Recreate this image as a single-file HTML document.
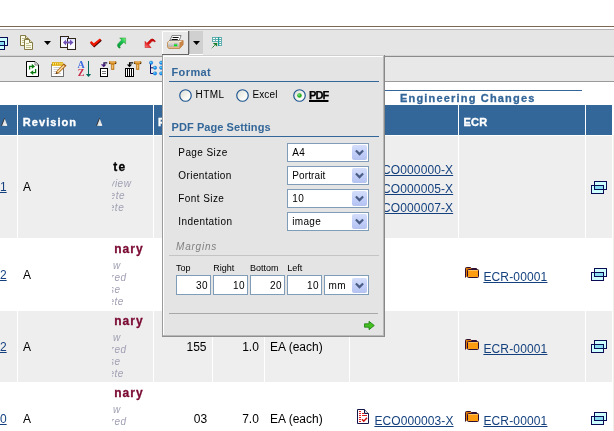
<!DOCTYPE html>
<html>
<head>
<meta charset="utf-8">
<style>
html,body{margin:0;padding:0;}
body{width:614px;height:431px;overflow:hidden;position:relative;background:#fff;font-family:"Liberation Sans",sans-serif;font-size:12px;color:#000;}
.a{position:absolute;}
.t{position:absolute;white-space:pre;line-height:1;}
.hd{position:absolute;top:105px;height:30px;background:#336699;}
.ht{position:absolute;white-space:pre;line-height:1;font-weight:bold;font-size:11px;color:#fff;top:117px;letter-spacing:1.05px;-webkit-text-stroke:0.35px #fff;}
.row{position:absolute;left:0;width:612px;background:#eeeeee;}
.vs{position:absolute;width:1px;background:#fff;}
.lnk{position:absolute;white-space:pre;line-height:1;font-size:12px;color:#14417e;text-decoration:underline;}
.d{position:absolute;white-space:pre;line-height:1;font-size:12px;color:#000;}
.gi{position:absolute;white-space:pre;line-height:1;font-size:10px;font-style:italic;color:#a0a0b4;letter-spacing:0.5px;}
.clip{position:absolute;left:112px;width:41px;overflow:hidden;}
.pl{position:absolute;white-space:pre;line-height:1;font-size:10px;color:#000;letter-spacing:0.42px;left:178.3px;}
.sel{position:absolute;left:287px;width:80px;height:17px;border:1px solid #7f9db9;background:#fff;}
.sel span{position:absolute;left:4.3px;top:4px;white-space:pre;line-height:1;font-size:10px;letter-spacing:0.3px;}
.btn{position:absolute;right:1px;top:1px;width:15px;height:15px;border-radius:2px;background:linear-gradient(180deg,#d4defb 0%,#c0cdf8 60%,#b4c2f0 100%);}
.inp{position:absolute;top:275px;width:33px;height:18px;border:1px solid #7f9db9;background:#fff;}
.inp span{position:absolute;right:2px;top:5px;white-space:pre;line-height:1;font-size:10px;letter-spacing:0.5px;}
.ml{position:absolute;top:264px;white-space:pre;line-height:1;font-size:9px;color:#000;}
</style>
</head>
<body>
<div id="wrap" style="position:absolute;left:0;top:0;width:614px;height:431px;will-change:transform">

<!-- top lines -->
<div class="a" style="left:0;top:26px;width:614px;height:1px;background:#7c6654"></div>
<div class="a" style="left:0;top:29px;width:614px;height:1px;background:#b4b4b4"></div>
<!-- toolbar 1 -->
<div class="a" style="left:0;top:30px;width:614px;height:25px;background:#e5e5e5"></div>
<div class="a" style="left:0;top:55px;width:614px;height:1px;background:#d4d4d4"></div>
<div class="a" style="left:0;top:56px;width:614px;height:1px;background:#9c9c9c"></div>
<!-- toolbar 2 -->
<div class="a" style="left:0;top:57px;width:614px;height:24px;background:#e8e8e8"></div>
<div class="a" style="left:385px;top:56px;width:229px;height:1px;background:#8a8a8a"></div>
<div class="a" style="left:0;top:81px;width:614px;height:1px;background:#9a9a9a"></div>

<!-- TOOLBAR1 ICONS -->
<svg class="a" style="left:-8px;top:37px" width="16" height="13" viewBox="0 0 16 13"><rect x="3.5" y="0.5" width="12" height="8" fill="#ccffff" stroke="#0a0a55"/><rect x="0.5" y="4.5" width="12" height="8" fill="#ccffff" stroke="#0a0a55"/><rect x="4" y="5" width="8" height="3" fill="#88ddf0"/><rect x="3.5" y="4.5" width="9" height="4" fill="none" stroke="#0a0a55"/></svg>
<svg class="a" style="left:20px;top:35px" width="14" height="15" viewBox="0 0 14 15">
<path d="M0.5 0.5H5.5L8.5 3.5V10.5H0.5Z" fill="#fbfbea" stroke="#857a42"/>
<path d="M5.5 0.5V3.5H8.5" fill="#e8e4c0" stroke="#857a42"/>
<path d="M2 3.5H5M2 5.5H7M2 7.5H7" stroke="#c4bf90"/>
<path d="M4.5 4.5H9.5L12.5 7.5V14.5H4.5Z" fill="#fbfbea" stroke="#857a42"/>
<path d="M9.5 4.5V7.5H12.5" fill="#e8e4c0" stroke="#857a42"/>
<path d="M6 8.5H9M6 10.5H11M6 12.5H11" stroke="#c4bf90"/>
</svg>
<svg class="a" style="left:44px;top:41px" width="7" height="4" viewBox="0 0 7 4"><path d="M0 0H7L3.5 4Z" fill="#000"/></svg>
<svg class="a" style="left:60px;top:36px" width="16" height="14" viewBox="0 0 16 14">
<defs><linearGradient id="cg" x1="0" y1="0" x2="0" y2="1"><stop offset="0" stop-color="#d8e0ff"/><stop offset="0.5" stop-color="#fff"/><stop offset="1" stop-color="#f4f4ff"/></linearGradient></defs>
<rect x="0.5" y="0.5" width="8" height="11" fill="url(#cg)" stroke="#33241a"/>
<rect x="7.5" y="2.5" width="8" height="11" fill="url(#cg)" stroke="#33241a"/>
<path d="M3 6.5L6 3.6V5.6H10V3.6L13.5 6.5L10 9.4V7.4H6V9.4Z" fill="#7352b8"/>
</svg>
<svg class="a" style="left:89px;top:38px" width="13" height="10" viewBox="0 0 13 10">
<path d="M1.4 5.4L5.2 9.6L12.8 2.8L11.6 1.6L5.4 6.6L2.8 4Z" fill="#4a0000"/>
<path d="M0.8 4.6L4.8 8.6L12.2 1.8L10.8 0.4L4.8 5.2L2.4 2.9Z" fill="#f01800"/>
</svg>
<svg class="a" style="left:116.4px;top:36.6px" width="11" height="12" viewBox="0 0 12 13">
<defs><linearGradient id="gg" x1="0" y1="1" x2="1" y2="0"><stop offset="0" stop-color="#00963c"/><stop offset="0.6" stop-color="#14c050"/><stop offset="1" stop-color="#7dff7d"/></linearGradient></defs>
<path d="M4 1H10.5V7.5L8.6 5.6L4.6 9.6Q3.6 10.6 4.8 11.8L3.6 12.2Q0.2 9.6 2.2 7.2L6.1 3.1Z" fill="url(#gg)" stroke="#2c8a2c" stroke-width="0.5"/>
</svg>
<svg class="a" style="left:143.5px;top:37.6px" width="12.2" height="10.2" viewBox="0 0 13 11">
<defs><linearGradient id="rg" x1="1" y1="0" x2="0" y2="1"><stop offset="0" stop-color="#b00000"/><stop offset="0.6" stop-color="#e01010"/><stop offset="1" stop-color="#ff8c8c"/></linearGradient></defs>
<path d="M1 10.4V3.6L3 5.6L7 1.6Q9.4 -0.4 12.4 3.6L11.2 4.2Q9.8 2.6 8.6 3.6L5 7.4L7.6 10.4Z" fill="url(#rg)" stroke="#c01010" stroke-width="0.5"/>
</svg>
<div class="a" style="left:162px;top:31px;width:27px;height:24px;background:#e8e8e8"></div>
<div class="a" style="left:162px;top:31px;width:1px;height:24px;background:#fff"></div>
<div class="a" style="left:162px;top:31px;width:26px;height:1px;background:#fbfbfb"></div>
<div class="a" style="left:188px;top:31px;width:1px;height:24px;background:#666"></div>
<div class="a" style="left:162px;top:54px;width:27px;height:1px;background:#666"></div>
<div class="a" style="left:189px;top:31px;width:14px;height:23px;background:#d0d0d0"></div>
<div class="a" style="left:189px;top:31px;width:1px;height:24px;background:#b0b0b0"></div>
<div class="a" style="left:189px;top:54px;width:14px;height:1px;background:#fff"></div>
<svg class="a" style="left:193px;top:41px" width="7" height="4" viewBox="0 0 7 4"><path d="M0 0H7L3.5 4Z" fill="#000"/></svg>
<svg class="a" style="left:167px;top:35px" width="17" height="14" viewBox="0 0 17 14">
<defs><linearGradient id="pg" x1="0" y1="0" x2="0" y2="1"><stop offset="0" stop-color="#e4e4e4"/><stop offset="1" stop-color="#b0b0b0"/></linearGradient></defs>
<path d="M0.4 7.4L2.8 5.5H16.1V9.6L12.6 13.6H1.8L0.4 11.8Z" fill="#e6bb88" stroke="#b4763a" stroke-width="0.8"/>
<path d="M12.4 7.3L16 5.6V9.5L12.4 13.4Z" fill="#c88444"/>
<path d="M0.7 7.3L2.9 5.7H15.6L12.4 7.3Z" fill="#fffbe6"/>
<rect x="0.9" y="7.4" width="11.4" height="4.3" fill="url(#pg)"/>
<path d="M5.2 0.4H14L13.4 2.6L12 5.7H2.8Z" fill="#fff" stroke="#4a4a4a" stroke-width="0.7"/>
<path d="M5.6 2.5H11.6M4.6 4.5H10.8" stroke="#111" stroke-width="1"/>
<rect x="7.2" y="8.5" width="3" height="0.9" fill="#9888a8"/>
<rect x="7" y="9.4" width="3.3" height="1.8" fill="#00e414"/>
</svg>
<svg class="a" style="left:211px;top:37px" width="12" height="12" viewBox="0 0 12 12">
<rect x="1" y="0" width="10" height="5" fill="#fff"/><rect x="7" y="5" width="4" height="4" fill="#fff"/>
<path d="M1.5 0V5M4.5 0V5M10.5 0V9M1 0.5H11M1 2.5H11M1 4.5H11M7 6.5H11M7 8.5H11" stroke="#62aeae" stroke-width="1" fill="none"/>
<path d="M7.6 0V9" stroke="#1a9c9c" stroke-width="1.3"/>
<path d="M1.8 6H6.1V9.6Z" fill="#0c6c1c"/><path d="M3 6.4H5.6V8.6Z" fill="#2a9a30"/>
<path d="M4.2 7.8L0.8 11.2" stroke="#0c6c1c" stroke-width="1" stroke-dasharray="1.2 0.7"/>
</svg>
<!-- TOOLBAR2 ICONS -->
<svg class="a" style="left:26px;top:61px" width="13" height="16" viewBox="0 0 13 16">
<path d="M0.5 0.5H9L12.5 4V15.5H0.5Z" fill="#fff" stroke="#000"/>
<path d="M9 0.8V4H12.2" fill="#f0f0f0" stroke="#777" stroke-width="0.9"/>
<path d="M3.6 8.6V5.4H6.5" fill="none" stroke="#0c7c10" stroke-width="1.3"/>
<path d="M5.8 2.8L9 5.4L5.8 7.8Z" fill="#0c7c10"/>
<path d="M9.6 8V11.6H6.5" fill="none" stroke="#0c7c10" stroke-width="1.3"/>
<path d="M7.2 9.2L4 11.6L7.2 13.9Z" fill="#0c7c10"/>
</svg>
<svg class="a" style="left:51px;top:61px" width="16" height="16" viewBox="0 0 16 16">
<rect x="0.5" y="3.5" width="12" height="12" fill="#fff" stroke="#8a8a8a"/>
<path d="M0.5 15.5H12.5V6" fill="none" stroke="#6e6e6e"/>
<path d="M2.5 6.5H9M2.5 8.5H8M2.5 10.5H7M2.5 12.5H10" stroke="#cfcfcf"/>
<rect x="0.9" y="1.2" width="11.2" height="3.6" fill="#dcaa00"/>
<path d="M2.4 2V3.6M4.6 2V3.6M6.8 2V3.6M9 2V3.6M11 2V3.6" stroke="#ffe9a0" stroke-width="1"/>
<path d="M5.2 10.4L12.8 2.6L15.4 4.8L7.4 12.6L4.7 12.9Z" fill="#b06a18"/>
<path d="M6 10.8L13.2 3.6L14.2 4.6L7 11.8Z" fill="#ffe2a8"/>
<path d="M4.7 12.9L5.1 11.2L6.6 12.6Z" fill="#402a10"/>
<path d="M12.8 2.6L15.4 4.8L14.6 5.6L12 3.4Z" fill="#9a5a10"/>
</svg>
<div class="t" style="left:77.5px;top:59.5px;font-family:'Liberation Serif',serif;font-weight:bold;font-size:10px;color:#3a6ae0">A</div>
<div class="t" style="left:77.8px;top:67.5px;font-family:'Liberation Serif',serif;font-weight:bold;font-size:10px;color:#cc2848">Z</div>
<svg class="a" style="left:85px;top:61px" width="7" height="16" viewBox="0 0 7 16"><path d="M3.5 0V14" stroke="#00665a" stroke-width="1"/><path d="M0.9 13H6.1L3.5 16Z" fill="#00665a"/></svg>
<svg class="a" style="left:100px;top:62px" width="9" height="15" viewBox="0 0 9 15">
<path d="M7.2 0.8H4V3.4" fill="none" stroke="#1c1050" stroke-width="1.3"/><path d="M1 2.4H6.4L3.8 5.3Z" fill="#3a1570"/><path d="M1 2.4H3L3.2 4.6Z" fill="#7a3ab0"/>
<rect x="0.5" y="6.5" width="7" height="8" fill="#fff" stroke="#000"/><path d="M2 9.5H6M2 11.5H6" stroke="#777"/></svg>
<svg class="a" style="left:109px;top:61px" width="8" height="9" viewBox="0 0 8 9"><path d="M0.2 0.4H7V2.2L5 3.2V8.7H2.4V3.2L0.2 2.2Z" fill="#d48a22" stroke="#a8640e" stroke-width="0.5"/><path d="M0.2 1.6V2.4L1.2 2.8M7 1.6V2.4L6 2.8" stroke="#3a2000" stroke-width="0.9" fill="none"/><path d="M1.2 1H6" stroke="#ffd080" stroke-width="0.8"/><path d="M3.7 4V7.6" stroke="#ffe0a0" stroke-width="0.8"/></svg>
<svg class="a" style="left:125px;top:62px" width="10" height="15" viewBox="0 0 10 15">
<path d="M8.2 0.8H4.6V3.4" fill="none" stroke="#000" stroke-width="1.3"/><path d="M1.8 2.4H7.2L4.5 5.3Z" fill="#000"/>
<rect x="0.5" y="6.5" width="8" height="8" fill="#fff" stroke="#000"/><path d="M2.5 7V14M4.5 7V14M6.5 7V14" stroke="#000"/></svg>
<svg class="a" style="left:134px;top:61px" width="8" height="9" viewBox="0 0 8 9"><path d="M0.2 0.4H7V2.2L5 3.2V8.7H2.4V3.2L0.2 2.2Z" fill="#d48a22" stroke="#a8640e" stroke-width="0.5"/><path d="M0.2 1.6V2.4L1.2 2.8M7 1.6V2.4L6 2.8" stroke="#3a2000" stroke-width="0.9" fill="none"/><path d="M1.2 1H6" stroke="#ffd080" stroke-width="0.8"/><path d="M3.7 4V7.6" stroke="#ffe0a0" stroke-width="0.8"/></svg>
<svg class="a" style="left:148px;top:60px" width="14" height="17" viewBox="0 0 14 17">
<path d="M2.5 4V13.5H5M2.5 7.8H5" fill="none" stroke="#101060" stroke-width="1"/>
<g fill="#1488ee" stroke="#0a60c0" stroke-width="0.4"><circle cx="3.1" cy="2.8" r="1.7"/><circle cx="7" cy="7.8" r="1.7"/><circle cx="7" cy="13.4" r="1.7"/><circle cx="13.2" cy="2.8" r="1.7"/><circle cx="13.2" cy="7.8" r="1.7"/><circle cx="13.2" cy="13.4" r="1.7"/></g>
<g fill="#70e4ff"><circle cx="2.8" cy="2.4" r="0.8"/><circle cx="6.7" cy="7.4" r="0.8"/><circle cx="6.7" cy="13" r="0.8"/><circle cx="12.9" cy="2.4" r="0.8"/><circle cx="12.9" cy="7.4" r="0.8"/><circle cx="12.9" cy="13" r="0.8"/></g>
</svg>

<!-- group header -->
<div class="a" style="left:385px;top:90px;width:197px;height:1px;background:#336699"></div>
<div class="t" style="left:400px;top:93px;font-weight:bold;font-size:11px;color:#336699;letter-spacing:1.18px;-webkit-text-stroke:0.3px #336699">Engineering Changes</div>

<!-- header row -->
<div class="hd" style="left:0;width:17px"></div>
<div class="hd" style="left:18px;width:135px"></div>
<div class="hd" style="left:154px;width:58px"></div>
<div class="hd" style="left:213px;width:51px"></div>
<div class="hd" style="left:265px;width:84px"></div>
<div class="hd" style="left:350px;width:108px"></div>
<div class="hd" style="left:459px;width:126px"></div>
<div class="hd" style="left:586px;width:26px"></div>
<svg class="a" style="left:1px;top:118px" width="7" height="8" viewBox="0 0 7 8"><path d="M3.6 0.2L6.4 7.8H0.6Z" fill="#e2e2e2"/><path d="M2.6 7H6" stroke="#fff" stroke-width="1"/><path d="M3.6 0.2L3 1.5L0.5 7.8" fill="none" stroke="#2a2a2a" stroke-width="0.9"/></svg><svg class="a" style="left:96px;top:118px" width="7" height="8" viewBox="0 0 7 8"><path d="M3.6 0.2L6.4 7.8H0.6Z" fill="#e2e2e2"/><path d="M2.6 7H6" stroke="#fff" stroke-width="1"/><path d="M3.6 0.2L3 1.5L0.5 7.8" fill="none" stroke="#2a2a2a" stroke-width="0.9"/></svg><div class="ht" style="left:22.8px">Revision</div>
<div class="ht" style="left:158px">F</div>
<div class="ht" style="left:463.6px;letter-spacing:0.15px">ECR</div>

<!-- rows -->
<div class="row" style="top:136px;height:102px"></div>
<div class="row" style="top:311px;height:71px"></div>
<!-- vertical separators (white) -->
<div class="vs" style="left:17px;top:105px;height:326px"></div>
<div class="vs" style="left:153px;top:105px;height:326px"></div>
<div class="vs" style="left:212px;top:105px;height:326px"></div>
<div class="vs" style="left:264px;top:105px;height:326px"></div>
<div class="vs" style="left:349px;top:105px;height:326px"></div>
<div class="vs" style="left:458px;top:105px;height:326px"></div>
<div class="vs" style="left:585px;top:105px;height:326px"></div>

<div class="a" style="left:613px;top:135px;width:1px;height:296px;background:#f0eee6"></div>
<!-- ROW CONTENT -->
<div class="lnk" style="left:-6.7px;top:181px;letter-spacing:0px">01</div>
<div class="d" style="left:23px;top:181px">A</div>
<div class="lnk" style="left:-6.7px;top:269px;letter-spacing:0px">02</div>
<div class="d" style="left:23px;top:269px">A</div>
<div class="lnk" style="left:-6.7px;top:341px;letter-spacing:0px">02</div>
<div class="d" style="left:23px;top:341px">A</div>
<div class="lnk" style="left:-6.7px;top:413px;letter-spacing:0px">00</div>
<div class="d" style="left:23px;top:413px">A</div>
<div class="d" style="left:186.5px;top:341px">155</div>
<div class="d" style="left:242.2px;top:341px">1.0</div>
<div class="d" style="left:270px;top:341px">EA (each)</div>
<div class="d" style="left:193.8px;top:413px">03</div>
<div class="d" style="left:242.2px;top:413px">7.0</div>
<div class="d" style="left:270px;top:413px">EA (each)</div>
<div class="lnk" style="left:374px;top:164px;letter-spacing:0.1px">ECO000000-X</div>
<div class="lnk" style="left:374px;top:183px;letter-spacing:0.1px">ECO000005-X</div>
<div class="lnk" style="left:374px;top:202px;letter-spacing:0.1px">ECO000007-X</div>
<svg class="a" style="left:357px;top:409px" width="12" height="15" viewBox="0 0 12 15"><path d="M0.5 0.5H7.5L11.5 4.5V14.5H0.5Z" fill="#fff" stroke="#15154a"/><path d="M7.5 0.5V4.5H11.5" fill="#d4d4d4" stroke="#15154a"/><path d="M2 2.5H4M2 4.5H4M2 6.5H4M2 8.5H4M2 10.5H4M2 12.5H4M5 4.5H7M5 6.5H10" stroke="#e02020"/><path d="M5 10.2L6.8 12.2L10 8.8" stroke="#cc1010" stroke-width="1.5" fill="none"/></svg>
<div class="lnk" style="left:374.4px;top:415px;letter-spacing:0.1px">ECO000003-X</div>
<svg class="a" style="left:465px;top:267px" width="15" height="12" viewBox="0 0 15 12"><path d="M0.5 10.5V1.5Q0.5 0.5 1.5 0.5H5.5L6.5 1.5H11.5V3" fill="#e07800" stroke="#301030"/><rect x="2.5" y="2.5" width="11" height="8" rx="1" fill="#ff9c10" stroke="#301030"/><path d="M3.5 3.5H12.5" stroke="#ffc060"/></svg>
<div class="lnk" style="left:483.4px;top:271px;letter-spacing:0.15px">ECR-00001</div>
<svg class="a" style="left:465px;top:339px" width="15" height="12" viewBox="0 0 15 12"><path d="M0.5 10.5V1.5Q0.5 0.5 1.5 0.5H5.5L6.5 1.5H11.5V3" fill="#e07800" stroke="#301030"/><rect x="2.5" y="2.5" width="11" height="8" rx="1" fill="#ff9c10" stroke="#301030"/><path d="M3.5 3.5H12.5" stroke="#ffc060"/></svg>
<div class="lnk" style="left:483.4px;top:343px;letter-spacing:0.15px">ECR-00001</div>
<svg class="a" style="left:465px;top:411px" width="15" height="12" viewBox="0 0 15 12"><path d="M0.5 10.5V1.5Q0.5 0.5 1.5 0.5H5.5L6.5 1.5H11.5V3" fill="#e07800" stroke="#301030"/><rect x="2.5" y="2.5" width="11" height="8" rx="1" fill="#ff9c10" stroke="#301030"/><path d="M3.5 3.5H12.5" stroke="#ffc060"/></svg>
<div class="lnk" style="left:483.4px;top:415px;letter-spacing:0.15px">ECR-00001</div>
<svg class="a" style="left:591px;top:181px" width="16" height="13" viewBox="0 0 16 13"><rect x="3.5" y="0.5" width="12" height="8" fill="#ccffff" stroke="#0a0a55"/><rect x="0.5" y="4.5" width="12" height="8" fill="#ccffff" stroke="#0a0a55"/><rect x="4" y="5" width="8" height="3" fill="#88ddf0"/><rect x="3.5" y="4.5" width="9" height="4" fill="none" stroke="#0a0a55"/></svg>
<svg class="a" style="left:591px;top:268px" width="16" height="13" viewBox="0 0 16 13"><rect x="3.5" y="0.5" width="12" height="8" fill="#ccffff" stroke="#0a0a55"/><rect x="0.5" y="4.5" width="12" height="8" fill="#ccffff" stroke="#0a0a55"/><rect x="4" y="5" width="8" height="3" fill="#88ddf0"/><rect x="3.5" y="4.5" width="9" height="4" fill="none" stroke="#0a0a55"/></svg>
<svg class="a" style="left:591px;top:340px" width="16" height="13" viewBox="0 0 16 13"><rect x="3.5" y="0.5" width="12" height="8" fill="#ccffff" stroke="#0a0a55"/><rect x="0.5" y="4.5" width="12" height="8" fill="#ccffff" stroke="#0a0a55"/><rect x="4" y="5" width="8" height="3" fill="#88ddf0"/><rect x="3.5" y="4.5" width="9" height="4" fill="none" stroke="#0a0a55"/></svg>
<svg class="a" style="left:591px;top:412px" width="16" height="13" viewBox="0 0 16 13"><rect x="3.5" y="0.5" width="12" height="8" fill="#ccffff" stroke="#0a0a55"/><rect x="0.5" y="4.5" width="12" height="8" fill="#ccffff" stroke="#0a0a55"/><rect x="4" y="5" width="8" height="3" fill="#88ddf0"/><rect x="3.5" y="4.5" width="9" height="4" fill="none" stroke="#0a0a55"/></svg>
<div class="clip" style="top:136px;height:102px"><div class="t" style="right:26.599999999999994px;top:25px;font-weight:bold;font-size:12px;color:#000;letter-spacing:1.3px;-webkit-text-stroke:0.3px #000">te</div><div class="gi" style="right:21.599999999999994px;top:42.5px">view</div><div class="gi" style="right:28.0px;top:54.5px">ete</div><div class="gi" style="right:28.799999999999997px;top:66.5px">ete</div></div>
<div class="clip" style="top:238px;height:73px"><div class="t" style="right:9.400000000000006px;top:5px;font-weight:bold;font-size:12px;color:#7a0a33;letter-spacing:1.0px;-webkit-text-stroke:0.3px #7a0a33">nary</div><div class="gi" style="right:32.2px;top:23px">w</div><div class="gi" style="right:26.5px;top:35px">red</div><div class="gi" style="right:32.5px;top:47px">se</div><div class="gi" style="right:29.200000000000003px;top:59px">ete</div></div>
<div class="clip" style="top:310px;height:73px"><div class="t" style="right:9.400000000000006px;top:5px;font-weight:bold;font-size:12px;color:#7a0a33;letter-spacing:1.0px;-webkit-text-stroke:0.3px #7a0a33">nary</div><div class="gi" style="right:32.2px;top:23px">w</div><div class="gi" style="right:26.5px;top:35px">red</div><div class="gi" style="right:32.5px;top:47px">se</div><div class="gi" style="right:29.200000000000003px;top:59px">ete</div></div>
<div class="clip" style="top:382px;height:73px"><div class="t" style="right:9.400000000000006px;top:5px;font-weight:bold;font-size:12px;color:#7a0a33;letter-spacing:1.0px;-webkit-text-stroke:0.3px #7a0a33">nary</div><div class="gi" style="right:32.2px;top:23px">w</div><div class="gi" style="right:26.5px;top:35px">red</div><div class="gi" style="right:32.5px;top:47px">se</div><div class="gi" style="right:29.200000000000003px;top:59px">ete</div></div>

<!-- POPUP -->
<div class="a" style="left:162px;top:55px;width:223px;height:282px;background:#e4e4e4"></div>
<div class="a" style="left:162px;top:55px;width:1px;height:282px;background:#9a9a9a"></div>
<div class="a" style="left:163px;top:56px;width:220px;height:1px;background:#fff"></div>
<div class="a" style="left:163px;top:56px;width:1px;height:279px;background:#fff"></div>
<div class="a" style="left:163px;top:55px;width:26px;height:1px;background:#eeeeee"></div>
<div class="a" style="left:189px;top:55px;width:196px;height:1px;background:#cfcfcf"></div>
<div class="a" style="left:383px;top:56px;width:1px;height:280px;background:#b8b8b8"></div>
<div class="a" style="left:384px;top:55px;width:1px;height:282px;background:#888"></div>
<div class="a" style="left:163px;top:335px;width:221px;height:1px;background:#b8b8b8"></div>
<div class="a" style="left:162px;top:336px;width:223px;height:1px;background:#8e8e8e"></div>
<div class="t" style="left:171.5px;top:67px;font-weight:bold;font-size:11px;color:#336699;letter-spacing:0.4px">Format</div>
<div class="a" style="left:169px;top:81px;width:210px;height:1px;background:#336699"></div>
<svg class="a" style="left:179px;top:88.6px" width="13" height="13" viewBox="0 0 13 13"><defs><linearGradient id="rg1" x1="0" y1="0" x2="1" y2="1"><stop offset="0" stop-color="#dcdcd4"/><stop offset="0.6" stop-color="#f8f8f4"/><stop offset="1" stop-color="#fff"/></linearGradient></defs><circle cx="6.5" cy="6.5" r="5.75" fill="url(#rg1)" stroke="#1c548f" stroke-width="1.15"/></svg>
<svg class="a" style="left:236px;top:88.6px" width="13" height="13" viewBox="0 0 13 13"><defs><linearGradient id="rg2" x1="0" y1="0" x2="1" y2="1"><stop offset="0" stop-color="#dcdcd4"/><stop offset="0.6" stop-color="#f8f8f4"/><stop offset="1" stop-color="#fff"/></linearGradient></defs><circle cx="6.5" cy="6.5" r="5.75" fill="url(#rg2)" stroke="#1c548f" stroke-width="1.15"/></svg>
<svg class="a" style="left:293px;top:88.6px" width="13" height="13" viewBox="0 0 13 13"><defs><linearGradient id="rg3" x1="0" y1="0" x2="1" y2="1"><stop offset="0" stop-color="#dcdcd4"/><stop offset="0.6" stop-color="#f8f8f4"/><stop offset="1" stop-color="#fff"/></linearGradient></defs><circle cx="6.5" cy="6.5" r="5.75" fill="url(#rg3)" stroke="#1c548f" stroke-width="1.15"/><circle cx="6.5" cy="6.5" r="2.3" fill="#2bb02b"/><circle cx="6" cy="6" r="1" fill="#6fe06f"/></svg>
<div class="t" style="left:195.5px;top:90px;font-size:10px;letter-spacing:0.45px">HTML</div>
<div class="t" style="left:252.5px;top:90px;font-size:10px;letter-spacing:0.1px">Excel</div>
<div class="t" style="left:309px;top:90px;font-size:11px;font-weight:bold;letter-spacing:-0.85px;text-decoration:underline;text-decoration-thickness:1.5px;-webkit-text-stroke:0.25px #000">PDF</div>
<div class="t" style="left:171.5px;top:122px;font-weight:bold;font-size:11px;color:#336699;letter-spacing:0.08px">PDF Page Settings</div>
<div class="a" style="left:169px;top:136px;width:210px;height:1px;background:#336699"></div>
<div class="pl" style="top:148px">Page Size</div>
<div class="sel" style="top:143px"><span>A4</span><div class="btn"><svg class="a" style="left:3px;top:4px" width="9" height="7" viewBox="0 0 9 7"><path d="M0.9 1.5L4.5 5.1L8.1 1.5" fill="none" stroke="#4a5d85" stroke-width="2.2"/></svg></div></div>
<div class="pl" style="top:171px">Orientation</div>
<div class="sel" style="top:166px"><span style="letter-spacing:0.12px">Portrait</span><div class="btn"><svg class="a" style="left:3px;top:4px" width="9" height="7" viewBox="0 0 9 7"><path d="M0.9 1.5L4.5 5.1L8.1 1.5" fill="none" stroke="#4a5d85" stroke-width="2.2"/></svg></div></div>
<div class="pl" style="top:194px">Font Size</div>
<div class="sel" style="top:189px"><span>10</span><div class="btn"><svg class="a" style="left:3px;top:4px" width="9" height="7" viewBox="0 0 9 7"><path d="M0.9 1.5L4.5 5.1L8.1 1.5" fill="none" stroke="#4a5d85" stroke-width="2.2"/></svg></div></div>
<div class="pl" style="top:217px">Indentation</div>
<div class="sel" style="top:212px"><span>image</span><div class="btn"><svg class="a" style="left:3px;top:4px" width="9" height="7" viewBox="0 0 9 7"><path d="M0.9 1.5L4.5 5.1L8.1 1.5" fill="none" stroke="#4a5d85" stroke-width="2.2"/></svg></div></div>
<div class="t" style="left:176px;top:241.5px;font-size:10px;font-style:italic;color:#808080;letter-spacing:0.8px">Margins</div>
<div class="a" style="left:169px;top:255px;width:210px;height:1px;background:#c4c4c4"></div>
<div class="ml" style="left:176px">Top</div>
<div class="inp" style="left:176px"><span>30</span></div>
<div class="ml" style="left:213.3px">Right</div>
<div class="inp" style="left:213px"><span>10</span></div>
<div class="ml" style="left:250px">Bottom</div>
<div class="inp" style="left:250px"><span>20</span></div>
<div class="ml" style="left:287.2px">Left</div>
<div class="inp" style="left:287px"><span>10</span></div>
<div class="sel" style="left:324px;top:275px;width:43px;height:18px"><span style="top:5px;left:3.5px">mm</span><div class="btn" style="top:2px"><svg class="a" style="left:3px;top:4px" width="9" height="7" viewBox="0 0 9 7"><path d="M0.9 1.5L4.5 5.1L8.1 1.5" fill="none" stroke="#4a5d85" stroke-width="2.2"/></svg></div></div>
<div class="a" style="left:169px;top:313px;width:209px;height:1px;background:#a8a8a8"></div>
<svg class="a" style="left:364px;top:321px" width="11" height="9" viewBox="0 0 11 9"><path d="M0.5 2.8H5V0.3L10.3 4.5L5 8.7V6.2H0.5Z" fill="#44c020" stroke="#1d7a10" stroke-width="0.8"/></svg>

</div>
</body>
</html>
